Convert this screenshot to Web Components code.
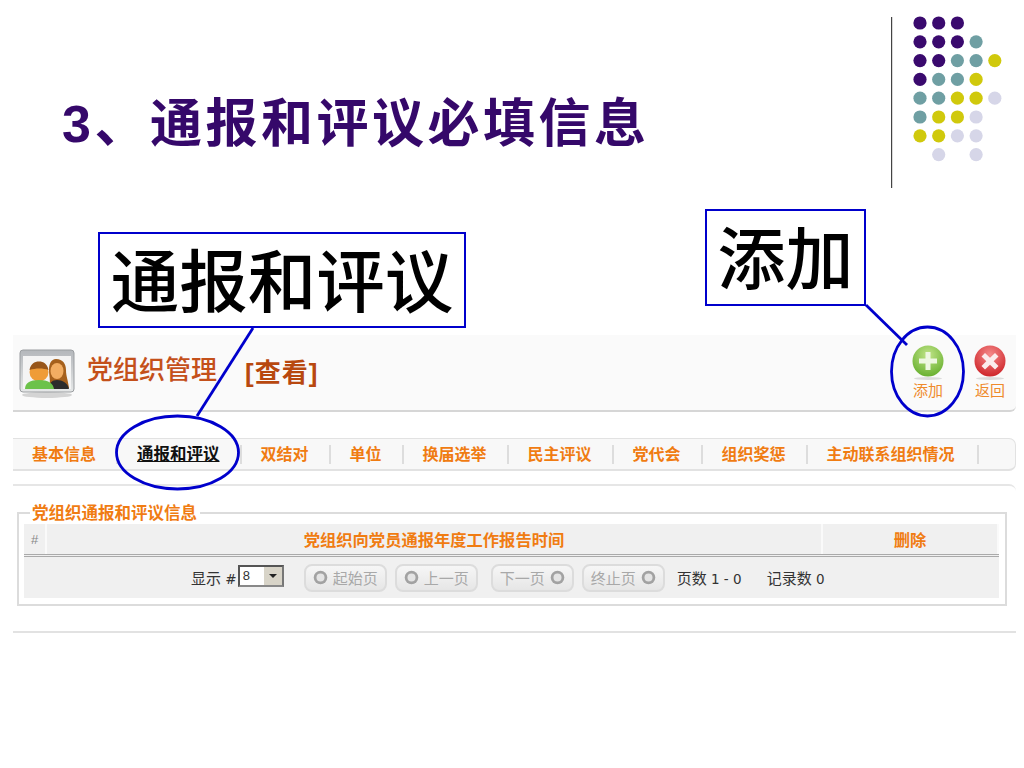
<!DOCTYPE html>
<html lang="zh">
<head>
<meta charset="utf-8">
<title>通报和评议必填信息</title>
<style>
    html, body { margin: 0; padding: 0; background: #fff; }
    body { width: 1024px; height: 768px; overflow: hidden; position: relative;
        font-family: "Liberation Sans", "Noto Sans CJK SC", sans-serif; }
</style>
</head>
<body>
<slide-page>
    <slide-header slot="header">3、通报和评议必填信息</slide-header>
    <app-toolbar slot="app" label="党组织管理" mode="[查看]">
        <tool-button kind="add">添加</tool-button>
        <tool-button kind="back">返回</tool-button>
    </app-toolbar>
    <tab-bar slot="app">
        <tab-item>基本信息</tab-item>
        <tab-item active>通报和评议</tab-item>
        <tab-item>双结对</tab-item>
        <tab-item>单位</tab-item>
        <tab-item>换届选举</tab-item>
        <tab-item>民主评议</tab-item>
        <tab-item>党代会</tab-item>
        <tab-item>组织奖惩</tab-item>
        <tab-item>主动联系组织情况</tab-item>
    </tab-bar>
    <info-panel slot="app" legend="党组织通报和评议信息">
        <pager-button dir="left">起始页</pager-button>
        <pager-button dir="left">上一页</pager-button>
        <pager-button dir="right" style="margin-left:5px">下一页</pager-button>
        <pager-button dir="right">终止页</pager-button>
    </info-panel>
    <call-out slot="notes" style="left:98px;top:232px;width:368px;height:96px;font-size:68.500px;padding-bottom:5px">通报和评议</call-out>
    <call-out slot="notes" style="left:705px;top:209px;width:161px;height:97px;font-size:68px;padding-bottom:7px">添加</call-out>
</slide-page>

<script>
class SlidePage extends HTMLElement {
    constructor() {
        super()
        this.attachShadow({ mode: 'open' })
        this.shadowRoot.innerHTML = `
            <style>
                :host { display: block; position: relative; width: 1024px; height: 768px; overflow: hidden; }
                .app { display: flex; flex-direction: column; margin: 135px 8px 0 13px; }
                svg { position: absolute; left: 0; top: 0; pointer-events: none; z-index: 2; }
            </style>
            <slot name="header"></slot>
            <div class="app"><slot name="app"></slot></div>
            <slot name="notes"></slot>
            <svg width="1024" height="768" fill="none" stroke="#0000cc" stroke-width="2.800">
                <line x1="253" y1="328" x2="197" y2="416"/>
                <line x1="866" y1="305" x2="907" y2="345"/>
                <ellipse cx="177.500" cy="452.500" rx="61" ry="36.500"/>
                <ellipse cx="927.500" cy="371.500" rx="36" ry="44.500"/>
            </svg>
        `
    }
}

class SlideHeader extends HTMLElement {
    constructor() {
        super()
        this.attachShadow({ mode: 'open' })
        const colors = ['#3a0a6e', '#6f9fa3', '#d0c90c', '#d6d6e8']
        // colour index per dot, -1 is an empty spot
        const rows = [
            [0, 0, 0, -1, -1],
            [0, 0, 0, 1, -1],
            [0, 0, 1, 1, 2],
            [0, 1, 1, 2, -1],
            [1, 1, 2, 2, 3],
            [1, 2, 2, 3, -1],
            [2, 2, 3, 3, -1],
            [-1, 3, -1, 3, -1],
        ]
        let dots = ''
        rows.forEach((row, r) => row.forEach((c, i) => {
            if (c >= 0) dots += `<circle cx="${29 + i * 18.7}" cy="${23 + r * 18.8}" r="6.6" fill="${colors[c]}"/>`
        }))
        this.shadowRoot.innerHTML = `
            <style>
                :host { display: flex; justify-content: space-between; height: 200px; padding-left: 62px; }
                h1 { margin: 0; padding-top: 92px; font-size: 52px; line-height: 64px; font-weight: bold;
                     color: #35086a; letter-spacing: 3.500px; white-space: nowrap; }
                svg { display: block; margin-right: 20px; }
            </style>
            <h1><slot></slot></h1>
            <svg width="113" height="200">
                <line x1="0.500" y1="17" x2="0.500" y2="188" stroke="#444" stroke-width="1.400"/>
                ${dots}
            </svg>
        `
    }
}

class AppToolbar extends HTMLElement {
    constructor() {
        super()
        this.attachShadow({ mode: 'open' })
        this.shadowRoot.innerHTML = `
            <style>
                :host { display: flex; align-items: center; height: 77px; box-sizing: border-box;
                        background: #fafafa; border-bottom: 2px solid #d6d6d6; border-bottom-right-radius: 6px;
                        padding: 0 10px 0 6px; }
                svg.logo { display: block; margin-right: 12px; margin-top: 2px; }
                .label { color: #c4501a; font-size: 26px; font-weight: 500; line-height: 30px; margin-top: -5px; }
                .mode { color: #b8480f; font-size: 26px; font-weight: bold; margin: -5px 0 0 28px; letter-spacing: 1px; }
                .tools { margin-left: auto; display: flex; gap: 30px; }
            </style>
            <svg class="logo" width="56" height="52" viewBox="0 0 56 52">
                <defs>
                    <linearGradient id="fr" x1="0" y1="0" x2="0" y2="1">
                        <stop offset="0" stop-color="#b4b7bb"/><stop offset="1" stop-color="#e6e8e8"/>
                    </linearGradient>
                </defs>
                <ellipse cx="28" cy="47" rx="25" ry="3" fill="#d4d4d4"/>
                <rect x="1" y="2" width="54" height="42" rx="3" fill="url(#fr)" stroke="#9a9da0"/>
                <rect x="4" y="8" width="48" height="33" fill="#f4f4f4"/>
                <path d="M37 11c7 0 10 5 10 11 0 6 2 10 3 18H30c2-7 0-12 0-18 0-6 2-11 7-11z" fill="#a5601c"/>
                <ellipse cx="38" cy="23" rx="6.500" ry="8" fill="#f2ad62"/>
                <path d="M30 41c0-6 3-9 8-9s11 3 12 9z" fill="#2c2c2c"/>
                <circle cx="20" cy="24" r="9.500" fill="#ef9c38"/>
                <path d="M10.500 22c1-6 5-8.500 9.500-8.500s8.500 2.500 9.500 8.500c-5-2-13-2-19 0z" fill="#97561a"/>
                <path d="M6 41c0-6 5-9 14-9s14 3 15 9z" fill="#6cc24a"/>
            </svg>
            <span class="label">${this.getAttribute('label')}</span>
            <span class="mode">${this.getAttribute('mode')}</span>
            <div class="tools"><slot></slot></div>
        `
    }
}

class ToolButton extends HTMLElement {
    constructor() {
        super()
        this.attachShadow({ mode: 'open' })
        const add = this.getAttribute('kind') === 'add'
        const stops = add ? ['#c2e58a', '#63ad2a'] : ['#f58a8a', '#cc1f24']
        const mark = add
            ? '<path d="M13.500 7h5v6.500H25v5h-6.500V25h-5v-6.500H7v-5h6.500z" fill="#eef7e2"/>'
            : '<path d="M11 8l5 4.800L21 8l3.500 3.500-4.800 4.800 4.800 4.800L21 24.500l-5-4.800-5 4.800-3.500-3.500 4.800-4.800-4.800-4.800z" fill="#fbecec"/>'
        this.shadowRoot.innerHTML = `
            <style>
                :host { display: flex; flex-direction: column; align-items: center; width: 32px; }
                svg { display: block; }
                span { color: #ef8a2c; font-size: 15px; line-height: 18px; white-space: nowrap; margin-top: 1px; }
            </style>
            <svg width="32" height="36" viewBox="0 0 32 36">
                <defs>
                    <radialGradient id="g" cx="0.500" cy="0.300" r="0.750">
                        <stop offset="0" stop-color="${stops[0]}"/><stop offset="1" stop-color="${stops[1]}"/>
                    </radialGradient>
                </defs>
                <ellipse cx="16" cy="33.500" rx="14" ry="1.500" fill="#dcdcdc"/>
                <circle cx="16" cy="16" r="15.500" fill="url(#g)"/>
                ${mark}
            </svg>
            <span><slot></slot></span>
        `
    }
}

class TabBar extends HTMLElement {
    constructor() {
        super()
        this.attachShadow({ mode: 'open' })
        this.shadowRoot.innerHTML = `
            <style>
                :host { display: flex; align-items: center; height: 33px; box-sizing: border-box; margin-top: 26px;
                        background: #f8f8f8; border: 1px solid #e2e2e2; border-width: 1px 1px 2px 0;
                        border-radius: 0 7px 7px 0; }
            </style>
            <slot></slot>
        `
    }
}

class TabItem extends HTMLElement {
    constructor() {
        super()
        this.attachShadow({ mode: 'open' })
        this.shadowRoot.innerHTML = `
            <style>
                :host { display: block; padding: 0 20px 0 19px; border-right: 2px solid #ddd; height: 19px;
                        font-size: 16px; line-height: 19px; font-weight: bold; color: #f07c12; white-space: nowrap; }
                :host([active]) { color: #111; text-decoration: underline; font-size: 16.500px; }
                :host(:last-child) { padding-right: 22px; }
            </style>
            <slot></slot>
        `
    }
}

class InfoPanel extends HTMLElement {
    constructor() {
        super()
        this.attachShadow({ mode: 'open' })
        this.shadowRoot.innerHTML = `
            <style>
                :host { display: block; margin-top: 13px; height: 149px; box-sizing: border-box;
                        border-top: 2px solid #e6e6e6; border-bottom: 2px solid #e2e2e2; border-top-right-radius: 7px;
                        padding: 18px 9px 0 4px; }
                fieldset { margin: 0; padding: 0 6px 6px 5px; border: 2px solid #dcdcdc; box-sizing: border-box; }
                legend { padding: 0 3px 0 2px; margin: 0 0 2px 6px; color: #f07c12; font-size: 16.500px; font-weight: bold; line-height: 18px; }
                .head { display: grid; grid-template-columns: 23px 1fr 176px; height: 33px; background: #f0f0f0;
                        border-bottom: 3px double #aaa; box-sizing: border-box; color: #f07c12; font-size: 16.300px; font-weight: bold; }
                .head div { display: flex; align-items: center; justify-content: center; border-right: 2px solid #fafafa; }
                .head .num { color: #888; font-weight: normal; font-size: 13px; }
                .foot { display: flex; align-items: center; height: 41px; background: #f0f0f0; padding-left: 167px;
                        font-family: "DejaVu Sans", "Noto Sans CJK SC", sans-serif; font-size: 13.500px; color: #333; white-space: nowrap; }
                .cjk { font-size: 15px; }
                .select { display: flex; width: 46px; height: 22px; box-sizing: border-box; border: 2px solid #555;
                          border-right-color: #777; border-bottom-color: #888; background: #fff; margin: -3px 20px 0 1px;
                          font-family: "Liberation Sans", sans-serif; font-size: 13px; line-height: 18px; padding-left: 3px; }
                .select i { margin-left: auto; width: 18px; background: #d8d4c8; position: relative; }
                .select i::after { content: ""; position: absolute; left: 5px; top: 7px; border: 4px solid transparent;
                                   border-top: 4px solid #222; border-bottom: 0; }
                .pager { display: flex; gap: 8px; }
                .page-no { margin-left: 12px; }
                .count { margin-left: 25px; }
            </style>
            <fieldset>
                <legend>${this.getAttribute('legend')}</legend>
                <div class="head">
                    <div class="num">#</div>
                    <div>党组织向党员通报年度工作报告时间</div>
                    <div>删除</div>
                </div>
                <div class="foot">
                    <span><span class="cjk">显示</span> #</span>
                    <div class="select">8<i></i></div>
                    <div class="pager"><slot></slot></div>
                    <span class="page-no"><span class="cjk">页数</span> 1 - 0</span>
                    <span class="count"><span class="cjk">记录数</span> 0</span>
                </div>
            </fieldset>
        `
    }
}

class PagerButton extends HTMLElement {
    constructor() {
        super()
        this.attachShadow({ mode: 'open' })
        const right = this.getAttribute('dir') === 'right'
        this.shadowRoot.innerHTML = `
            <style>
                :host { display: flex; align-items: center; gap: 5px; height: 28px; box-sizing: border-box; padding: 0 7px;
                        flex-direction: ${right ? 'row-reverse' : 'row'};
                        border: 2px solid #dcdcdc; border-radius: 8px; background: linear-gradient(#f6f6f6, #e6e6e6);
                        color: #a8a8a8; font-family: "Noto Sans CJK SC", sans-serif; font-size: 15px; white-space: nowrap; }
                svg { display: block; }
            </style>
            <svg width="15" height="15" viewBox="0 0 15 15">
                <circle cx="7.500" cy="7.500" r="6.800" fill="#a2a2a2"/>
                <circle cx="7.500" cy="7.500" r="4" fill="#e4e4e4"/>
            </svg>
            <slot></slot>
        `
    }
}

class CallOut extends HTMLElement {
    constructor() {
        super()
        this.attachShadow({ mode: 'open' })
        this.shadowRoot.innerHTML = `
            <style>
                :host { position: absolute; display: flex; align-items: center; justify-content: center; box-sizing: border-box;
                        background: #fff; border: 2.800px solid #0000cc; color: #000; font-weight: 500; white-space: nowrap; z-index: 1; }
            </style>
            <slot></slot>
        `
    }
}

customElements.define('slide-page', SlidePage)
customElements.define('slide-header', SlideHeader)
customElements.define('app-toolbar', AppToolbar)
customElements.define('tool-button', ToolButton)
customElements.define('tab-bar', TabBar)
customElements.define('tab-item', TabItem)
customElements.define('info-panel', InfoPanel)
customElements.define('pager-button', PagerButton)
customElements.define('call-out', CallOut)
</script>
</body>
</html>
